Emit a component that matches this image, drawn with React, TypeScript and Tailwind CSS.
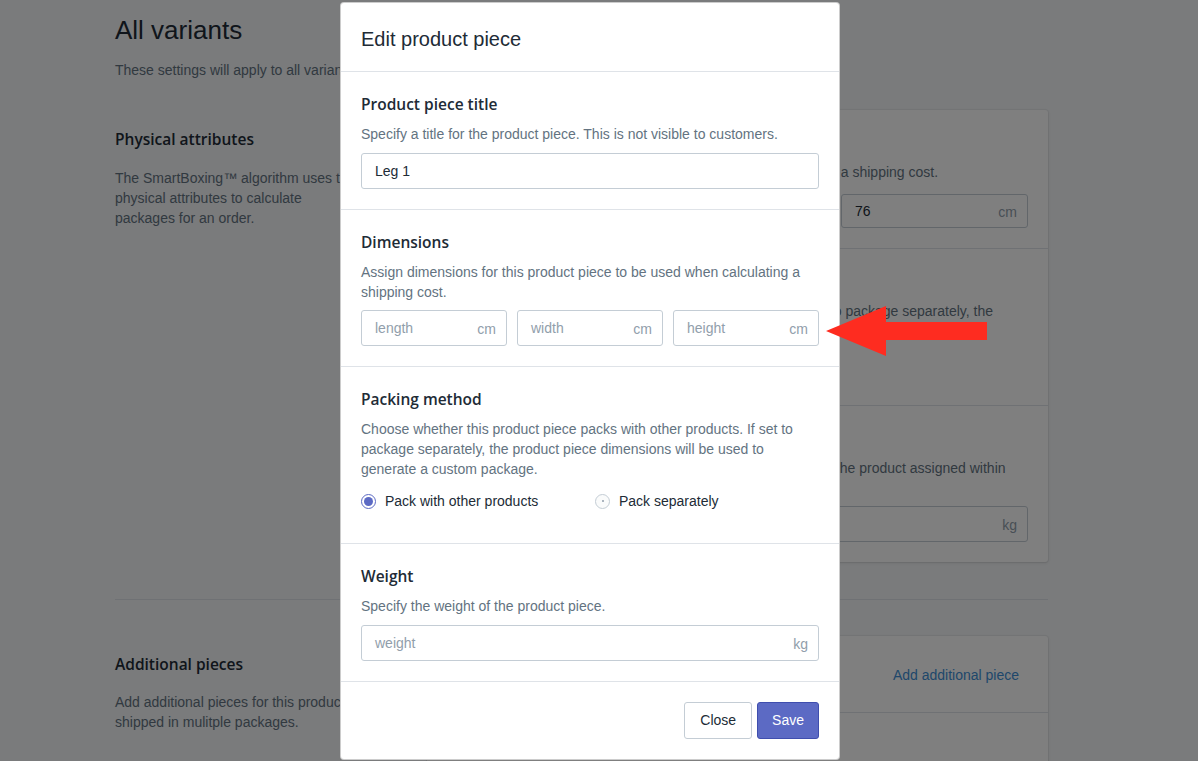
import React from "react";

const TITLE = "font-['Open_Sans',Arial,sans-serif] font-semibold text-[15.5px] leading-6 text-[#212b36]";

function Field({
  placeholder,
  value,
  unit,
  tall = true,
}: {
  placeholder?: string;
  value?: string;
  unit?: string;
  tall?: boolean;
}) {
  return (
    <div
      className={
        "flex items-center border border-[#c4cdd5] rounded-[3px] pl-[13px] pr-[10px] text-[14px] bg-white " +
        (tall ? "h-[36px]" : "h-[34px]")
      }
    >
      <span className={value ? "text-[#212b36]" : "text-[#919eab]"}>{value ?? placeholder}</span>
      {unit && <span className="ml-auto pt-[2px] text-[#919eab]">{unit}</span>}
    </div>
  );
}

function Radio({ checked, label }: { checked?: boolean; label: string }) {
  return (
    <label className="flex items-center gap-[9px] text-[14px] text-[#212b36] leading-5">
      {checked ? (
        <span className="w-[15px] h-[15px] rounded-full border border-[#5c6ac4] bg-white flex items-center justify-center">
          <span className="w-[9px] h-[9px] rounded-full bg-[#5c6ac4]" />
        </span>
      ) : (
        <span className="w-[15px] h-[15px] rounded-full border border-[#c4cdd5] bg-[#fafbfb] flex items-center justify-center">
          <span className="w-[2px] h-[2px] rounded-full bg-[#919eab]" />
        </span>
      )}
      <span>{label}</span>
    </label>
  );
}

function Section({
  title,
  desc,
  children,
  last,
  pb = "pb-5",
}: {
  title: string;
  desc: string;
  children?: React.ReactNode;
  last?: boolean;
  pb?: string;
}) {
  return (
    <div className={"px-5 pt-5 " + pb + (last ? "" : " border-b border-[#dfe3e8]")}>
      <h3 className={TITLE}>{title}</h3>
      <p className="mt-2 text-[14px] leading-5 text-[#637381]">{desc}</p>
      {children}
    </div>
  );
}

export default function App() {
  return (
    <div className="relative w-[1198px] h-[761px] overflow-hidden bg-[#f4f6f8] font-['Liberation_Sans',Arial,sans-serif]">
      {/* Page underneath */}
      <div className="ml-[115px] w-[933px] pt-[13px]">
        <h1 className="text-[26px] leading-[34px] font-light text-[#212b36]">All variants</h1>
        <p className="mt-[13px] text-[14px] leading-5 text-[#637381]">
          These settings will apply to all variants of this product.
        </p>

        <div className="mt-[30px] flex gap-5">
          <div className="w-[292px] pt-[17px]">
            <h2 className={TITLE}>Physical attributes</h2>
            <p className="mt-[17px] text-[14px] leading-5 text-[#637381]">
              The SmartBoxing™ algorithm uses these
              <br />
              physical attributes to calculate
              <br />
              packages for an order.
            </p>
          </div>
          <div className="w-[621px] bg-white rounded-[3px] shadow-[0_0_0_1px_rgba(63,63,68,0.05),0_1px_3px_0_rgba(63,63,68,0.15)]">
            <div className="px-5 pt-5 pb-5 border-b border-[#dfe3e8]">
              <h3 className={TITLE}>Dimensions</h3>
              <p className="mt-2 text-[14px] leading-5 text-[#637381]">
                Assign dimensions for this product to be used when calculating a shipping cost.
              </p>
              <div className="mt-3 grid grid-cols-3 gap-[10px]">
                <Field value="152" unit="cm" tall={false} />
                <Field value="61" unit="cm" tall={false} />
                <Field value="76" unit="cm" tall={false} />
              </div>
            </div>
            <div className="px-5 pt-5 pb-8 border-b border-[#dfe3e8]">
              <h3 className={TITLE}>Packing method</h3>
              <p className="mt-2 text-[14px] leading-5 text-[#637381]">
                Choose whether this product packs with other products. If set to package separately, the
                <br />
                product dimensions will be used to generate a custom package.
              </p>
              <div className="mt-3 flex">
                <div className="w-[234px]">
                  <Radio checked label="Pack with other products" />
                </div>
                <Radio label="Pack separately" />
              </div>
            </div>
            <div className="px-5 pt-5 pb-5">
              <h3 className={TITLE}>Weight</h3>
              <p className="mt-2 text-[14px] leading-5 text-[#637381]">
                Specify the weight of the product. This should be the weight of the product assigned within
                <br />
                its packaging.
              </p>
              <div className="mt-2">
                <Field value="18" unit="kg" />
              </div>
            </div>
          </div>
        </div>

        <div className="mt-[37px] border-t border-[#dfe3e8]" />

        <div className="mt-9 flex gap-5">
          <div className="w-[292px] pt-4">
            <h2 className={TITLE}>Additional pieces</h2>
            <p className="mt-4 text-[14px] leading-5 text-[#637381]">
              Add additional pieces for this product if it is
              <br />
              shipped in mulitple packages.
            </p>
          </div>
          <div className="w-[621px] bg-white rounded-[3px] shadow-[0_0_0_1px_rgba(63,63,68,0.05),0_1px_3px_0_rgba(63,63,68,0.15)]">
            <div className="h-[77px] flex items-start justify-end pt-[29px] pr-[29px] border-b border-[#dfe3e8]">
              <span className="text-[14px] leading-5 text-[#3f8fd6]">Add additional piece</span>
            </div>
            <div className="px-5 pt-5 pb-5">
              <p className="text-[14px] leading-5 text-[#637381]">
                No additional pieces have been added for this product.
              </p>
            </div>
          </div>
        </div>
      </div>

      {/* Overlay */}
      <div className="absolute inset-0 bg-black/50" />

      {/* Modal */}
      <div className="absolute left-[340px] top-[2px] w-[500px] bg-white border border-black/20 rounded-[4px] overflow-hidden">
        <div className="px-5 pt-[22px] pb-[18px] border-b border-[#dfe3e8]">
          <h2 className="text-[20px] leading-7 text-[#212b36]">Edit product piece</h2>
        </div>

        <Section title="Product piece title" desc="Specify a title for the product piece. This is not visible to customers.">
          <div className="mt-[9px]">
            <Field value="Leg 1" />
          </div>
        </Section>

        <Section
          title="Dimensions"
          desc="Assign dimensions for this product piece to be used when calculating a shipping cost."
        >
          <div className="mt-2 grid grid-cols-3 gap-[10px]">
            <Field placeholder="length" unit="cm" />
            <Field placeholder="width" unit="cm" />
            <Field placeholder="height" unit="cm" />
          </div>
        </Section>

        <Section
          title="Packing method"
          desc="Choose whether this product piece packs with other products. If set to package separately, the product piece dimensions will be used to generate a custom package."
          pb="pb-8"
        >
          <div className="mt-3 flex">
            <div className="w-[234px]">
              <Radio checked label="Pack with other products" />
            </div>
            <Radio label="Pack separately" />
          </div>
        </Section>

        <Section title="Weight" desc="Specify the weight of the product piece.">
          <div className="mt-[9px]">
            <Field placeholder="weight" unit="kg" />
          </div>
        </Section>

        <div className="flex justify-end gap-[5px] p-5">
          <button className="h-[37px] px-[15px] rounded-[3px] border border-[#c4cdd5] bg-white text-[14px] text-[#212b36]">
            Close
          </button>
          <button className="h-[37px] px-[14px] rounded-[3px] border border-[#3f4eae] bg-[#5c6ac4] text-[14px] text-white">
            Save
          </button>
        </div>
      </div>

      {/* Annotation arrow */}
      <svg className="absolute left-[820px] top-[300px]" width="175" height="62" viewBox="0 0 175 62">
        <polygon points="6,31 66,6 66,22 167,22 167,40 66,40 66,56" fill="#fe2c20" />
      </svg>
    </div>
  );
}
